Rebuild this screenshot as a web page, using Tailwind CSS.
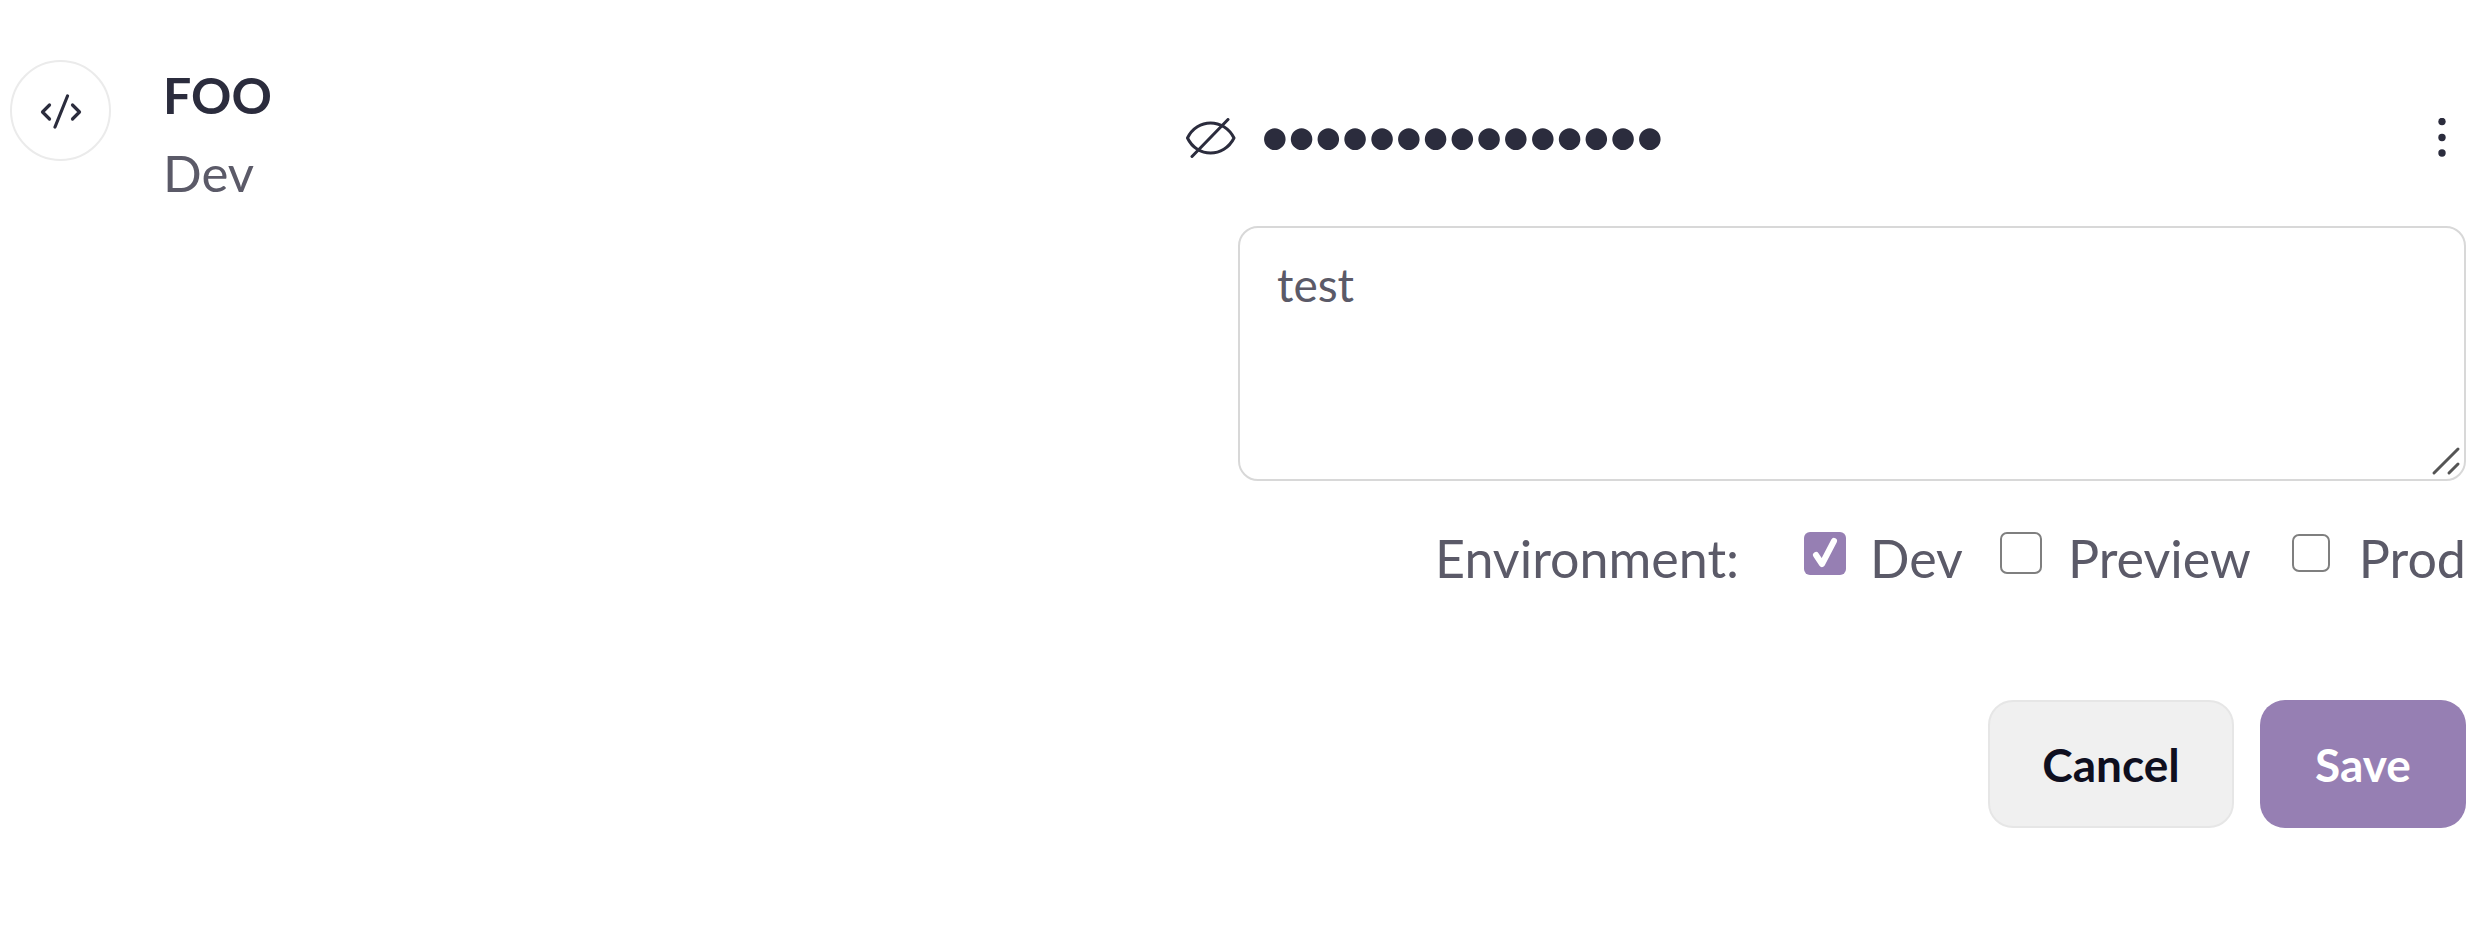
<!DOCTYPE html>
<html>
<head>
    <title>Secrets</title>
    <script src="https://cdn.jsdelivr.net/npm/@tailwindcss/browser@4"></script>
</head>
<body class="bg-white h-screen overflow-hidden font-['Lato',sans-serif]">
    <div class="flex justify-between pl-[10px] pr-[10px] pt-[60px]">
        <!-- Name -->
        <div class="flex gap-[52px]">
            <div class="w-[101px] h-[101px] rounded-full border-2 border-[#ebebeb] flex items-center justify-center">
                <svg width="42" height="36" viewBox="0 0 42 36" fill="none" stroke="#2b2c3d" stroke-width="3.2" stroke-linecap="round" stroke-linejoin="round">
                    <path d="M9.5 12 L2.5 19 L9.5 26"/>
                    <path d="M32.5 12 L39.5 19 L32.5 26"/>
                    <path d="M27.5 3 L15 34"/>
                </svg>
            </div>
            <div>
                <p class="text-[50px] leading-[60px] font-bold text-[#2b2c3d] mt-[5px]">FOO</p>
                <p class="text-[51px] leading-[60px] text-[#5b5a68] mt-[18px]">Dev</p>
            </div>
        </div>

        <!-- Secret form -->
        <div class="w-[1280px] flex flex-col items-end">
            <div class="w-full flex items-center h-[56px] mt-[50px] pr-[20px]">
                <svg width="50" height="40" viewBox="0 0 50 40" fill="none" stroke="#2b2c3d" stroke-width="3" stroke-linecap="round" stroke-linejoin="round">
                    <path d="M1.5 20 C11 0 38 0 48 20 C38 40 11 40 1.5 20 Z"/>
                    <path d="M42 1.5 L6 38.5"/>
                </svg>
                <span class="ml-[22px] -mt-[7px] text-[58px] leading-[56px] tracking-[-6.85px] text-[#2b2c3d]">•••••••••••••••</span>
                <svg class="ml-auto" width="8" height="40" viewBox="0 0 8 40" fill="#2b2c3d">
                    <circle cx="4" cy="3.5" r="3.7"/>
                    <circle cx="4" cy="19.5" r="3.7"/>
                    <circle cx="4" cy="35" r="3.7"/>
                </svg>
            </div>
            <div class="relative mt-[60px] w-[1228px] h-[255px] rounded-[20px] border-2 border-[#d8d8d8] px-[37px] py-[29px] text-[46px] leading-[56px] text-[#5b5a68]">
                test
                <svg class="absolute right-[3px] bottom-[3px]" width="30" height="30" viewBox="0 0 30 30" stroke="#555" stroke-width="3" stroke-linecap="round">
                    <path d="M3 27 L27 3"/>
                    <path d="M18 27 L27 18"/>
                </svg>
            </div>
            <div class="flex items-center mt-[55px] h-[44px] text-[52px] text-[#5b5a68]">
                <span class="mr-[65px]">Environment:</span>
                <span class="w-[42px] h-[43px] rounded-[6px] bg-[#967fb3] flex items-center justify-center mr-[24px] mb-[10px]">
                    <svg width="30" height="34" viewBox="0 0 30 34" fill="none" stroke="#fff" stroke-width="6" stroke-linecap="round" stroke-linejoin="round">
                        <path d="M6 19 L12 28 L24 5"/>
                    </svg>
                </span>
                <span class="mr-[37px]">Dev</span>
                <span class="w-[42px] h-[42px] rounded-[7px] border-2 border-[#7f7f7f] mr-[26px] mb-[10px]"></span>
                <span class="mr-[41px]">Preview</span>
                <span class="w-[38px] h-[38px] rounded-[7px] border-2 border-[#7f7f7f] mr-[29px] mb-[10px]"></span>
                <span>Prod</span>
            </div>
            <div class="flex gap-[26px] mt-[120px]">
                <button class="w-[246px] h-[128px] rounded-[25px] border-2 border-[#e6e6e6] bg-[#f0f0f0] text-[46px] font-bold text-[#0f0f1f]">Cancel</button>
                <button class="w-[206px] h-[128px] rounded-[25px] bg-[#967fb3] text-[46px] font-bold text-white">Save</button>
            </div>
        </div>
    </div>
</body>
</html>
